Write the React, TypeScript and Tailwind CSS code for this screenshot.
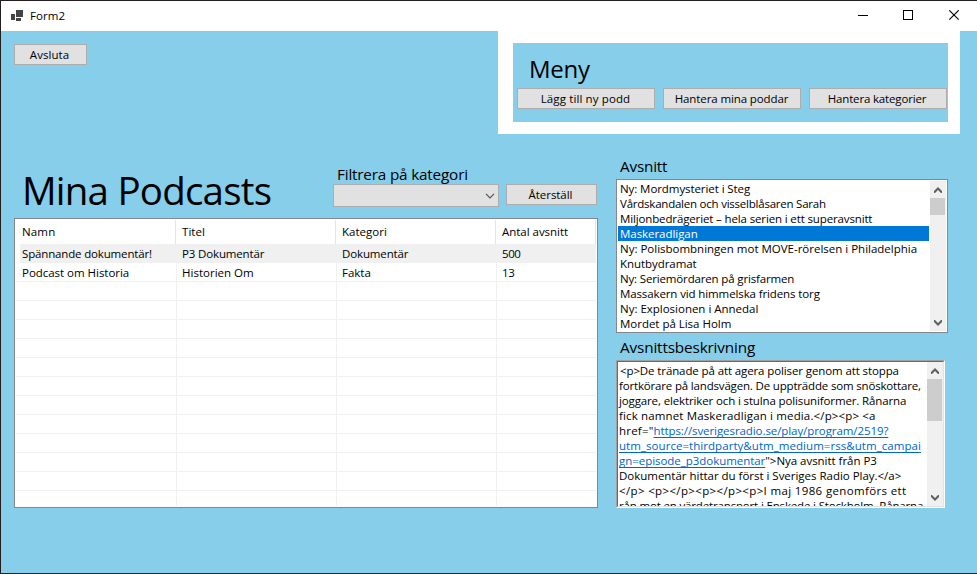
import type { ReactNode } from 'react';

type Line = { text: string; track: string };

const episodes: Line[] = [
  { text: 'Ny: Mordmysteriet i Steg', track: 'tracking-[-0.077px]' },
  { text: 'Vårdskandalen och visselblåsaren Sarah', track: 'tracking-[-0.227px]' },
  { text: 'Miljonbedrägeriet – hela serien i ett superavsnitt', track: 'tracking-[-0.135px]' },
  { text: 'Maskeradligan', track: 'tracking-[-0.050px]' },
  { text: 'Ny: Polisbombningen mot MOVE-rörelsen i Philadelphia', track: 'tracking-[-0.005px]' },
  { text: 'Knutbydramat', track: 'tracking-[-0.060px]' },
  { text: 'Ny: Seriemördaren på grisfarmen', track: 'tracking-[-0.155px]' },
  { text: 'Massakern vid himmelska fridens torg', track: 'tracking-[-0.116px]' },
  { text: 'Ny: Explosionen i Annedal', track: 'tracking-[-0.010px]' },
  { text: 'Mordet på Lisa Holm', track: 'tracking-[-0.020px]' },
];

const columns: Line[] = [
  { text: 'Namn', track: 'tracking-[0.15px]' },
  { text: 'Titel', track: 'tracking-[0.05px]' },
  { text: 'Kategori', track: 'tracking-[0.02px]' },
  { text: 'Antal avsnitt', track: 'tracking-[-0.03px]' },
];

const podcasts: Line[][] = [
  [
    { text: 'Spännande dokumentär!', track: 'tracking-[-0.158px]' },
    { text: 'P3 Dokumentär', track: 'tracking-[-0.150px]' },
    { text: 'Dokumentär', track: 'tracking-[-0.130px]' },
    { text: '500', track: 'tracking-[-0.4px]' },
  ],
  [
    { text: 'Podcast om Historia', track: 'tracking-[-0.030px]' },
    { text: 'Historien Om', track: 'tracking-[0.010px]' },
    { text: 'Fakta', track: 'tracking-[0px]' },
    { text: '13', track: 'tracking-[-0.3px]' },
  ],
];

const emptyRows = Array.from({ length: 12 }, (_, i) => i);

function Button({ children, className }: { children: ReactNode; className: string }) {
  return (
    <button className={`flex h-[21px] items-center justify-center border border-[#adadad] bg-[#e1e1e1] leading-[15px] whitespace-nowrap ${className}`}>
      {children}
    </button>
  );
}

function Arrow({ down = false }: { down?: boolean }) {
  return (
    <svg width="8" height="6" viewBox="0 0 8 6" className={down ? 'rotate-180' : ''}>
      <path d="M0 4 4 0 8 4V6H7L4 3 1 6H0Z" fill="#606060" />
    </svg>
  );
}

function ScrollBar({ thumb }: { thumb: string }) {
  return (
    <div className="flex w-4 shrink-0 flex-col bg-[#f0f0f0]">
      <div className="flex h-[17px] items-center pt-[1px] pl-[4px]"><Arrow /></div>
      <div className={`w-[15px] bg-[#cdcdcd] ${thumb}`} />
      <div className="grow" />
      <div className="flex h-[17px] items-center pl-[4px]"><Arrow down /></div>
    </div>
  );
}

function TitleBar() {
  return (
    <header className="flex h-[30px] shrink-0 items-center bg-white">
      <svg width="12" height="11" className="mb-[2px] ml-[10px]" fill="#444444" shapeRendering="crispEdges">
        <path d="M0 4h4v6H0zM5 0h7v7H5zM5 8h5v3H5z" />
      </svg>
      <span className="mb-[2px] ml-[7px] tracking-[0.050px]">Form2</span>
      <svg width="102" height="11" className="mr-[17px] mb-[1px] ml-auto" fill="none" stroke="#000">
        <path d="M0 5.5h10M45.500 0.500h9v9h-9z" shapeRendering="crispEdges" />
        <path d="M91.300 0.300l9.400 9.400M100.700 0.300l-9.400 9.400" strokeWidth="1.100" />
      </svg>
    </header>
  );
}

function PodcastTable() {
  return (
    <div className="h-[290px] w-[584px] overflow-hidden border border-[#828790] bg-white">
      <div className="mt-px flex h-6">
        {columns.map((c, i) => (
          <div key={c.text} className={`shrink-0 border-r border-[#e5e5e5] pt-[4px] leading-[15px] ${i === 0 ? 'w-[161px] pl-[7px]' : i === 3 ? 'w-[100px] pl-[6px]' : 'w-[160px] pl-[6px]'} ${c.track}`}>
            {c.text}
          </div>
        ))}
      </div>
      <div className="mx-px h-[262px] overflow-hidden">
        {podcasts.map((row, r) => (
          <div key={r} className={`flex h-[19px] border-b border-[#f0f0f0] ${r === 0 ? 'ml-[4px] bg-[#f0f0f0]' : ''}`}>
            {row.map((c, i) => (
              <div key={c.text} className={`shrink-0 pt-[2px] leading-[15px] whitespace-nowrap border-[#f0f0f0] ${i === 3 ? '' : 'border-r'} ${i === 0 ? (r === 0 ? 'w-[157px] pl-[2px]' : 'w-[161px] pl-[6px]') : 'w-[160px] pl-[5px]'} ${c.track}`}>
                {c.text}
              </div>
            ))}
          </div>
        ))}
        {emptyRows.map((r) => (
          <div key={r} className="flex h-[19px] border-b border-[#f0f0f0]">
            <div className="w-[161px] border-r border-[#f0f0f0]" />
            <div className="w-[160px] border-r border-[#f0f0f0]" />
            <div className="w-[160px] border-r border-[#f0f0f0]" />
          </div>
        ))}
      </div>
    </div>
  );
}

function Description() {
  const link = 'text-[#0066cc] underline decoration-1 underline-offset-[2px] [text-decoration-skip-ink:none]';
  return (
    <div className="h-[148px] w-[329px] border border-t-[#a0a0a0] border-r-white border-b-white border-l-[#a0a0a0]">
      <div className="flex h-full border border-t-[#696969] border-r-[#e3e3e3] border-b-[#e3e3e3] border-l-[#696969] bg-white">
        <div className="min-w-0 grow overflow-hidden pt-px pl-px leading-[15px] whitespace-pre">
          <p className="pl-[1px] tracking-[-0.110px]">{'<p>De tränade på att agera poliser genom att stoppa'}</p>
          <p className="tracking-[-0.171px]">fortkörare på landsvägen. De uppträdde som snöskottare,</p>
          <p className="tracking-[-0.130px]">joggare, elektriker och i stulna polisuniformer. Rånarna</p>
          <p className="tracking-[0.144px]">{'fick namnet Maskeradligan i media.</p><p> <a'}</p>
          <p><span className="tracking-[0.200px]">href="</span><span className={`tracking-[-0.078px] ${link}`}>https://sverigesradio.se/play/program/2519?</span></p>
          <p><span className={`tracking-[0.050px] ${link}`}>utm_source=thirdparty&amp;utm_medium=rss&amp;utm_campai</span></p>
          <p><span className={`tracking-[-0.040px] ${link}`}>gn=episode_p3dokumentar</span><span className="tracking-[-0.030px]">{'">Nya avsnitt från P3'}</span></p>
          <p className="tracking-[-0.020px]">{'Dokumentär hittar du först i Sveriges Radio Play.</a>'}</p>
          <p className="tracking-[0.355px]">{'</p> <p></p><p></p><p>I maj 1986 genomförs ett'}</p>
          <p className="tracking-[-0.161px]">rån mot en värdetransport i Enskede i Stockholm. Rånarna</p>
        </div>
        <ScrollBar thumb="h-[42px]" />
      </div>
    </div>
  );
}

export default function App() {
  return (
    <div className="flex h-[574px] w-[977px] flex-col overflow-hidden border-y border-l border-[#231f20] bg-[#87ceeb] font-['Open_Sans','Noto_Sans',sans-serif] text-[11.5px] leading-[15px] text-black">
      <TitleBar />
      <div className="flex h-[103px] shrink-0 justify-between pr-[17px] pl-[13px]">
        <Button className="mt-[13px] w-[73px] pr-[2px] tracking-[0.05px]">Avsluta</Button>
        <div className="w-[462px] bg-white px-[15px] pt-3 pr-3">
          <nav className="h-[79px] bg-[#87ceeb] pt-3 pl-1">
            <h2 className="h-[33px] pl-[12px] text-[24px] leading-[28px] tracking-[-0.26px]">Meny</h2>
            <div className="flex gap-2">
              <Button className="w-[138px] shrink-0 pr-[1px] tracking-[0.120px]">Lägg till ny podd</Button>
              <Button className="w-[138px] shrink-0 pr-[1px] tracking-[-0.108px]">Hantera mina poddar</Button>
              <Button className="w-[138px] shrink-0 pr-[2px] tracking-[-0.163px]">Hantera kategorier</Button>
            </div>
          </nav>
        </div>
      </div>
      <div className="flex pl-[13px]">
        <section className="w-[584px]">
          <div className="flex h-[84px]">
            <h1 className="w-[319px] pt-[29px] pl-[8px] text-[38.5px] leading-[54px] tracking-[-0.790px] whitespace-nowrap">Mina Podcasts</h1>
            <div className="pt-[30px]">
              <label className="block h-5 pl-[4px] text-[15.3px] leading-[20px] tracking-[-0.190px] whitespace-nowrap">Filtrera på kategori</label>
              <div className="flex h-[23px] w-[166px] items-center justify-end border border-[#adadad] bg-[#e1e1e1] pr-[3px]">
                <svg width="10" height="6" fill="none" stroke="#555555" strokeWidth="1.200"><path d="M1 .8 5 4.800 9 .8" /></svg>
              </div>
            </div>
            <Button className="mt-[50px] ml-[7px] w-[91px] pr-[2px] tracking-[-0.050px]">Återställ</Button>
          </div>
          <PodcastTable />
        </section>
        <section className="ml-[18px] w-[332px]">
          <h3 className="h-[45px] pt-[22px] pl-[4px] text-[15.3px] leading-[20px] tracking-[-0.200px]">Avsnitt</h3>
          <div className="flex h-[154px] border border-[#828790] bg-white p-px">
            <ul className="w-[311px] shrink-0">
              {episodes.map((e, i) => (
                <li key={e.text} className={`h-[15px] pl-[2px] whitespace-nowrap ${e.track} ${i === 3 ? 'bg-[#0078d7] text-white' : ''}`}>{e.text}</li>
              ))}
            </ul>
            <div className="ml-px flex"><ScrollBar thumb="h-[17px]" /></div>
          </div>
          <h3 className="h-[27px] pt-[4px] pl-[4px] text-[15.3px] leading-[20px] tracking-[-0.150px]">Avsnittsbeskrivning</h3>
          <Description />
        </section>
      </div>
    </div>
  );
}
